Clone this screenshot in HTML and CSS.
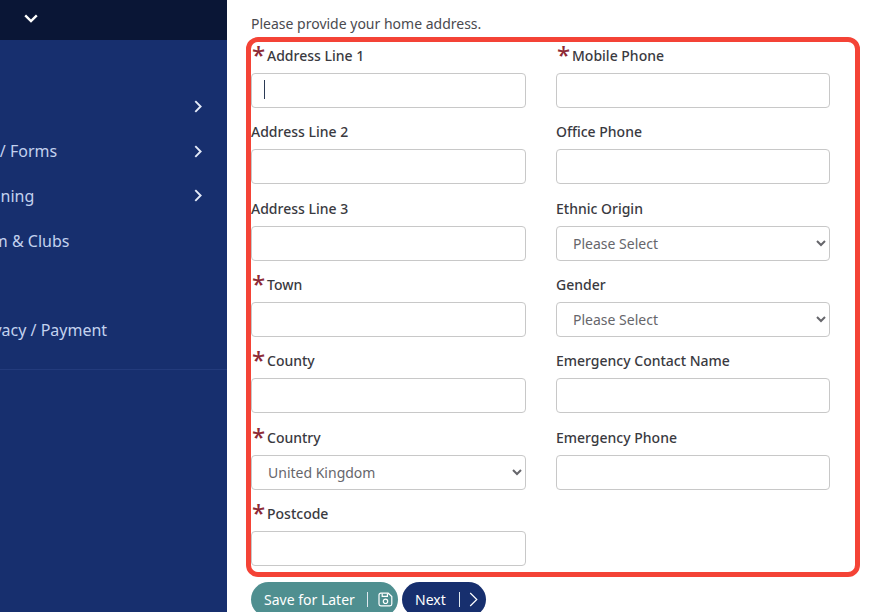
FILE: index.html
```html
<!DOCTYPE html>
<html lang="en">
<head>
    <meta charset="UTF-8">
    <meta name="viewport" content="width=device-width, initial-scale=1.0">
    <title>Home Address</title>
    <link rel="stylesheet" href="styles.css">
</head>
<body>
    <div class="sidebar">
        <div class="sidebar-top">
            <svg class="top-chevron" width="14" height="9" viewBox="0 0 14 9"><polyline points="1.2,1.4 7,7 12.8,1.4"/></svg>
        </div>
        <nav class="nav">
            <a class="nav-item"><span></span><svg class="nav-chevron" width="8" height="13" viewBox="0 0 8 13"><polyline points="1.3,1.2 6.6,6.5 1.3,11.8"/></svg></a>
            <a class="nav-item"><span>My / Forms</span><svg class="nav-chevron" width="8" height="13" viewBox="0 0 8 13"><polyline points="1.3,1.2 6.6,6.5 1.3,11.8"/></svg></a>
            <a class="nav-item"><span>Training</span><svg class="nav-chevron" width="8" height="13" viewBox="0 0 8 13"><polyline points="1.3,1.2 6.6,6.5 1.3,11.8"/></svg></a>
            <a class="nav-item"><span>Gym &amp; Clubs</span></a>
            <a class="nav-item"><span></span></a>
            <a class="nav-item"><span>Privacy / Payment</span></a>
        </nav>
    </div>

    <div class="main">
        <p class="intro">Please provide your home address.</p>

        <form class="address-form">
            <div class="field">
                <label class="required">Address Line 1</label>
                <div class="input-wrap">
                    <input type="text">
                    <span class="caret"></span>
                </div>
            </div>
            <div class="field">
                <label class="required">Mobile Phone</label>
                <input type="text">
            </div>
            <div class="field">
                <label>Address Line 2</label>
                <input type="text">
            </div>
            <div class="field">
                <label>Office Phone</label>
                <input type="text">
            </div>
            <div class="field">
                <label>Address Line 3</label>
                <input type="text">
            </div>
            <div class="field">
                <label>Ethnic Origin</label>
                <select><option>Please Select</option></select>
            </div>
            <div class="field">
                <label class="required">Town</label>
                <input type="text">
            </div>
            <div class="field">
                <label>Gender</label>
                <select><option>Please Select</option></select>
            </div>
            <div class="field">
                <label class="required">County</label>
                <input type="text">
            </div>
            <div class="field">
                <label>Emergency Contact Name</label>
                <input type="text">
            </div>
            <div class="field">
                <label class="required">Country</label>
                <select><option>United Kingdom</option></select>
            </div>
            <div class="field">
                <label>Emergency Phone</label>
                <input type="text">
            </div>
            <div class="field">
                <label class="required">Postcode</label>
                <input type="text">
            </div>
        </form>

        <div class="actions">
            <button type="button" class="btn btn-save">
                <span>Save for Later</span>
                <span class="btn-sep"></span>
                <svg class="btn-icon" width="15" height="15" viewBox="0 0 15 15"><path d="M2.8 1.2h7.4l3.6 3.4v7.4a1.8 1.8 0 0 1-1.8 1.8H2.8A1.8 1.8 0 0 1 1 12V3a1.8 1.8 0 0 1 1.8-1.8z"/><path d="M4.2 1.4v3h5.2v-3"/><circle cx="7.5" cy="9.3" r="2.2"/></svg>
            </button>
            <button type="button" class="btn btn-next">
                <span>Next</span>
                <span class="btn-sep"></span>
                <svg class="btn-icon" width="9" height="15" viewBox="0 0 9 15"><polyline points="1.2,1 7.8,7.5 1.2,14"/></svg>
            </button>
        </div>
    </div>
</body>
</html>
```

FILE: styles.css
```css
/* General Page Styles */
html, body {
    height: 100%;
}

body {
    margin: 0;
    padding: 0;
    display: flex;
    overflow: hidden;
    background-color: #ffffff;
    font-family: 'Noto Sans', sans-serif;
    color: #3a3a3f;
}

/* Sidebar */
.sidebar {
    flex: none;
    width: 227px;
    height: 100vh;
    overflow: hidden;
    background-color: #172f6e;
}

.sidebar-top {
    display: flex;
    align-items: center;
    height: 40px;
    padding: 0 0 4px 24px;
    box-sizing: border-box;
    background-color: #0a1636;
}

.top-chevron polyline {
    fill: none;
    stroke: #ffffff;
    stroke-width: 2.4;
}

.nav {
    margin-top: 44px;
    padding-bottom: 16px;
    border-bottom: 1px solid #233b7c;
}

.nav-item {
    display: flex;
    align-items: center;
    height: 44.8px;
    padding-right: 25px;
    margin-left: -27px;
    font-size: 16px;
    color: #c3d2ee;
    white-space: nowrap;
}

.nav-chevron {
    margin-left: auto;
}

.nav-chevron polyline {
    fill: none;
    stroke: #e4ebf8;
    stroke-width: 1.9;
}

/* Main Column */
.main {
    flex: 1;
    min-width: 0;
    padding: 14px 0 0 24px;
}

.intro {
    margin: 0 0 8px;
    font-size: 14px;
    line-height: 20px;
    color: #4a4a4f;
}

/* Address Form */
.address-form {
    display: grid;
    grid-template-columns: 275px 274px;
    column-gap: 30px;
    row-gap: 10.35px;
    align-content: start;
    width: 604px;
    height: 530px;
    box-sizing: border-box;
    border-radius: 7px;
    outline: 5px solid #f44336;
}

.field label {
    display: block;
    height: 28px;
    margin-bottom: 3px;
    font-size: 14px;
    font-weight: 500;
    line-height: 28px;
    white-space: nowrap;
}

.required::before {
    content: "*";
    display: inline-block;
    width: 16px;
    padding-left: 1px;
    box-sizing: border-box;
    font-size: 24px;
    line-height: 0;
    vertical-align: -3px;
    color: #8e2a35;
}

input[type="text"], select {
    display: block;
    width: 100%;
    height: 35px;
    box-sizing: border-box;
    border: 1px solid #c8c8c8;
    border-radius: 4px;
    background-color: #ffffff;
    font-family: inherit;
    font-size: 14px;
    color: #66666b;
}

select {
    padding-left: 12px;
}

.input-wrap {
    position: relative;
}

.caret {
    position: absolute;
    left: 13px;
    top: 7px;
    width: 1px;
    height: 19px;
    background-color: #2b3a55;
}

/* Buttons */
.actions {
    display: flex;
    gap: 4px;
    margin-top: 10px;
}

.btn {
    display: flex;
    align-items: center;
    height: 35px;
    padding: 0;
    border: none;
    border-radius: 18px;
    font-family: inherit;
    font-size: 14px;
    color: #ffffff;
}

.btn-save {
    width: 147px;
    padding-left: 13px;
    background-color: #4f8f90;
}

.btn-next {
    width: 84px;
    padding-left: 13px;
    background-color: #172f6e;
}

.btn-sep {
    width: 1px;
    height: 15px;
    background-color: #dfe8ee;
}

.btn-save .btn-sep {
    margin: 0 10px 0 12px;
}

.btn-next .btn-sep {
    margin: 0 9px 0 13px;
}

.btn-icon path, .btn-icon circle, .btn-icon polyline {
    fill: none;
    stroke: #ffffff;
    stroke-width: 1.2;
}
```
